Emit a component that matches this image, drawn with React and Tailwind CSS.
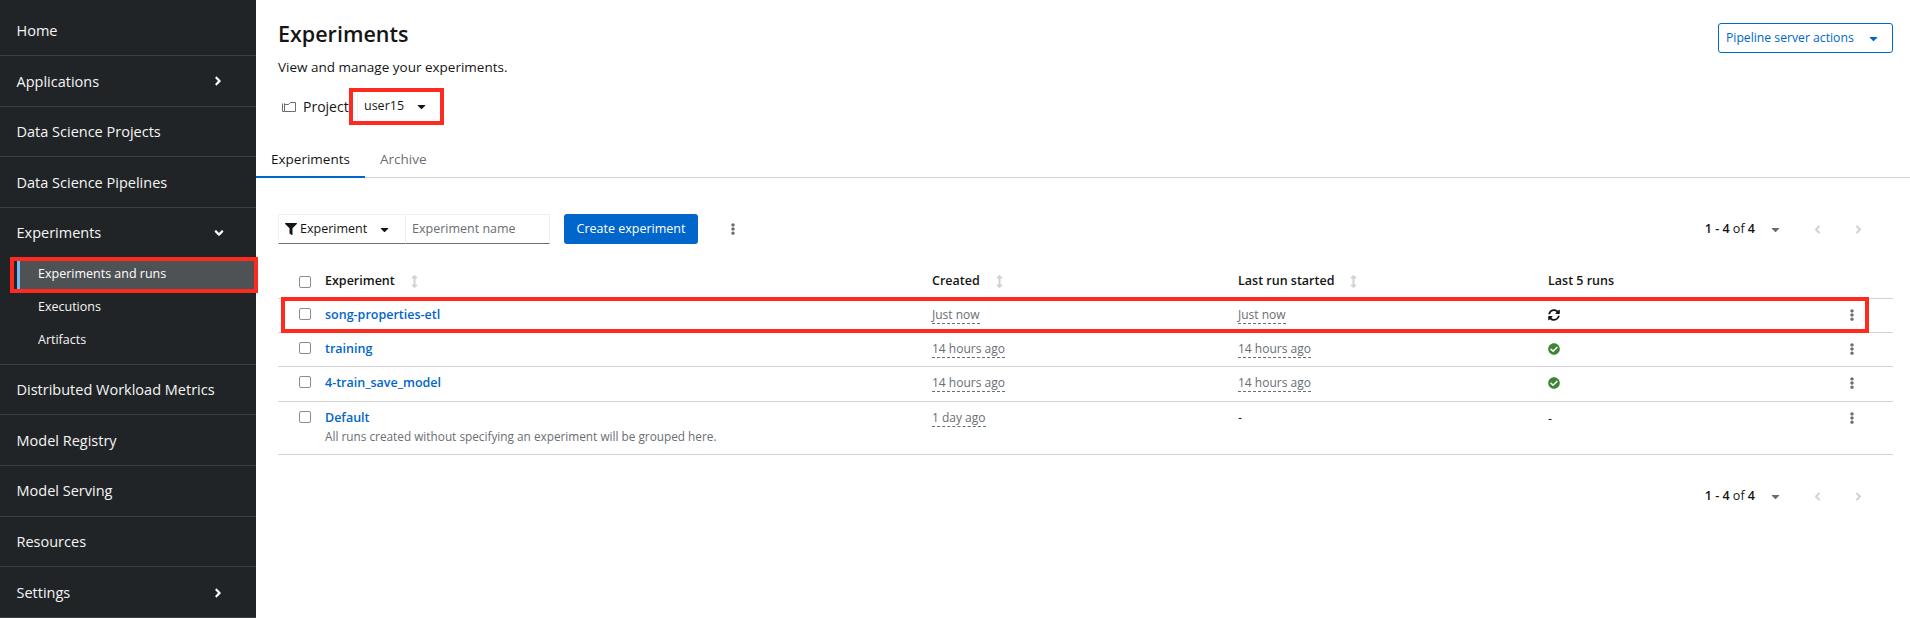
import React from 'react';
import { FaFilter, FaCheckCircle, FaSyncAlt, FaCaretDown, FaEllipsisV, FaAngleRight, FaAngleDown, FaAngleLeft, FaArrowsAltV } from 'react-icons/fa';

function NavItem({ label, icon }) {
    return (
        <div className='h-[50.67px] flex items-center justify-between border-b border-[#3c3f42] pt-[1px] pl-[16.5px] pr-[31px] text-[14.5px] text-[#f5f5f5]'>
            <span>{label}</span>
            {icon == 'right' && <FaAngleRight className='text-[14px] text-white' />}
        </div>
    );
}

function Sidebar() {
    return (
        <div className='relative z-10 w-[256px] h-[618px] shrink-0 bg-[#212427]'>
            <div className='pt-[5.5px]'>
                <NavItem label='Home' />
                <NavItem label='Applications' icon='right' />
                <NavItem label='Data Science Projects' />
                <NavItem label='Data Science Pipelines' />
            </div>
            <div className='border-b border-[#3c3f42] h-[156.5px]'>
                <div className='h-[49px] flex items-center justify-between pl-[16.5px] pr-[30px] text-[14.5px] text-[#f5f5f5]'>
                    <span>Experiments</span>
                    <FaAngleDown className='text-[14px] text-white' />
                </div>
                <div className='relative h-[36px] ml-[10px] w-[248px] border-[4px] border-[#fe2a20] bg-[#4f5255] flex items-center pl-[24px] pb-[2px] text-[12.5px] text-white'>
                    <div className='absolute left-0 top-0 bottom-0 w-[6px] bg-[#212427]'>
                        <div className='ml-[3px] h-full w-[3px] bg-[#73bcf7]' />
                    </div>
                    <span>Experiments and runs</span>
                </div>
                <div className='h-[28px] flex items-center pl-[38px] text-[12.5px] text-[#f5f5f5]'>Executions</div>
                <div className='h-[39px] flex items-center pl-[38px] text-[12.5px] text-[#f5f5f5]'>Artifacts</div>
            </div>
            <NavItem label='Distributed Workload Metrics' />
            <NavItem label='Model Registry' />
            <NavItem label='Model Serving' />
            <NavItem label='Resources' />
            <NavItem label='Settings' icon='right' />
        </div>
    );
}

function Stamp({ text }) {
    return <span className='text-[#6a6e73] text-[12px] border-b border-dashed border-[#6a6e73] leading-[17px] inline-block'>{text}</span>;
}

function Check() {
    return <div className='w-[12px] h-[12px] border border-[#8a8d90] rounded-[2px] bg-white' />;
}

function SortHead({ label, w }) {
    return (
        <div className={`flex items-center font-semibold text-[12.5px] text-[#151515] ${w}`}>
            <span>{label}</span>
            <FaArrowsAltV className='text-[13px] text-[#d2d2d2] ml-[13px]' />
        </div>
    );
}

function Row({ name, created, started, status, desc, outline, h }) {
    return (
        <div className={`relative flex items-start border-b border-[#d2d2d2] text-[12.5px] ${h}`}>
            <div className='w-[47px] pl-[21px] pt-[9px]'><Check /></div>
            <div className='w-[607px] pt-[6px]'>
                <div className='text-[#0066cc] font-semibold leading-[20px]'>{name}</div>
                {desc && <div className='text-[#6a6e73] text-[11.8px] leading-[17px]'>{desc}</div>}
            </div>
            <div className='w-[306px] pt-[7px]'><Stamp text={created} /></div>
            <div className='w-[310px] pt-[7px]'>
                {started == '-' ? <span className='text-[#151515]'>-</span> : <Stamp text={started} />}
            </div>
            <div className='flex-1 pt-[10px] leading-[13px]'>{status}</div>
            <div className='w-[47px] pt-[10px]'><FaEllipsisV className='text-[12px] text-[#6a6e73]' /></div>
            {outline && <div className='absolute left-[3px] right-[24px] top-[-2px] h-[36px] border-[4px] border-[#fe2a20]' />}
        </div>
    );
}

function Pager() {
    return (
        <div className='flex items-center text-[12.5px] text-[#151515]'>
            <span><b className='font-semibold'>1 - 4</b> of <b className='font-semibold'>4</b></span>
            <FaCaretDown className='text-[13px] text-[#6a6e73] ml-[14px]' />
            <FaAngleLeft className='text-[13px] text-[#d2d2d2] ml-[29px]' />
            <FaAngleRight className='text-[13px] text-[#d2d2d2] ml-[28px]' />
            <div className='w-[28px]' />
        </div>
    );
}

export default function App() {
    return (
        <div className="flex w-[1910px] h-[618px] overflow-hidden bg-white font-['Open_Sans',sans-serif]">
            <Sidebar />
            <div className='flex-1 min-w-0'>
                <div className='h-[60px] flex justify-between pl-[22px] pr-[17px]'>
                    <h1 className='text-[21.5px] font-semibold text-[#151515] pt-[18px] leading-[32px]'>Experiments</h1>
                    <button className='mt-[23px] w-[175px] h-[30px] border border-[#0066cc] rounded-[3px] text-[#0066cc] text-[12.2px] flex items-center pl-[7px] whitespace-nowrap'>
                        <span>Pipeline server actions</span>
                        <FaCaretDown className='text-[13px] ml-[13px]' />
                    </button>
                </div>
                <div className='pl-[22px] text-[13.5px] text-[#151515] leading-[20px] mt-[-3px]'>View and manage your experiments.</div>
                <div className='flex items-center pl-[25px] mt-[11px] h-[37px]'>
                    <svg width='16' height='14' viewBox='0 0 16 14' fill='none' stroke='#6a6e73' strokeWidth='1'><path d='M3.5 3.5v8h11v-9h-5l-2 2h-4zM1.5 3.5v8h2' /></svg>
                    <span className='text-[14px] text-[#151515] ml-[6px] w-[47px] whitespace-nowrap'>Project</span>
                    <div className='w-[95px] h-[37px] border-[4px] border-[#fe2a20] flex items-center text-[12.5px] text-[#151515] bg-white ml-[-1px]'>
                        <div className='h-full border-l border-[#f0f0f0] ml-[4px] pl-[6px] flex items-center'>
                            <span>user15</span>
                            <FaCaretDown className='text-[13px] ml-[11px]' />
                        </div>
                    </div>
                </div>
                <div className='flex items-end h-[45px] border-b border-[#d2d2d2] text-[13.5px] mt-[8px]'>
                    <div className='w-[109px] h-[45px] flex items-center pl-[15px] pt-[10px] text-[#151515] border-b-[2px] border-[#0066cc] mb-[-1px]'>Experiments</div>
                    <div className='h-[45px] flex items-center pl-[15px] pt-[10px] text-[#6a6e73]'>Archive</div>
                </div>
                <div className='flex items-center justify-between h-[30px] mt-[36px] pl-[22px] pr-[17px]'>
                    <div className='flex items-center'>
                        <div className='flex items-center w-[128px] h-[30px] border border-[#f0f0f0] border-b-[#6a6e73] text-[12.5px] text-[#151515] pl-[6px]'>
                            <FaFilter className='text-[12px] mr-[3px]' />
                            <span>Experiment</span>
                            <FaCaretDown className='text-[13px] ml-[11px]' />
                        </div>
                        <div className='flex items-center w-[144px] h-[30px] border border-[#f0f0f0] border-b-[#6a6e73] border-l-0 text-[12.5px] text-[#6a6e73] pl-[6px]'>Experiment name</div>
                        <button className='ml-[14px] w-[134px] h-[30px] bg-[#0066cc] rounded-[3px] text-white text-[12.5px] font-medium'>Create experiment</button>
                        <span className='ml-[29px]'><FaEllipsisV className='text-[12px] text-[#6a6e73]' /></span>
                    </div>
                    <Pager />
                </div>
                <div className='ml-[22px] mr-[17px] mt-[21px]'>
                    <div className='flex items-center h-[34px] border-b border-[#d2d2d2]'>
                        <div className='w-[47px] pl-[21px]'><Check /></div>
                        <SortHead label='Experiment' w='w-[607px]' />
                        <SortHead label='Created' w='w-[306px]' />
                        <SortHead label='Last run started' w='w-[310px]' />
                        <div className='font-semibold text-[12.5px] text-[#151515]'>Last 5 runs</div>
                    </div>
                    <Row h='h-[34px]' name='song-properties-etl' created='Just now' started='Just now' status={<FaSyncAlt className='text-[12px] text-[#151515]' />} outline />
                    <Row h='h-[34px]' name='training' created='14 hours ago' started='14 hours ago' status={<FaCheckCircle className='text-[12px] text-[#3e8635]' />} />
                    <Row h='h-[35px]' name='4-train_save_model' created='14 hours ago' started='14 hours ago' status={<FaCheckCircle className='text-[12px] text-[#3e8635]' />} />
                    <Row h='h-[53px]' name='Default' created='1 day ago' started='-' status={<span className='text-[12.5px] text-[#151515]'>-</span>} desc='All runs created without specifying an experiment will be grouped here.' />
                </div>
                <div className='flex justify-end pr-[17px] mt-[32px]'><Pager /></div>
            </div>
        </div>
    );
}
